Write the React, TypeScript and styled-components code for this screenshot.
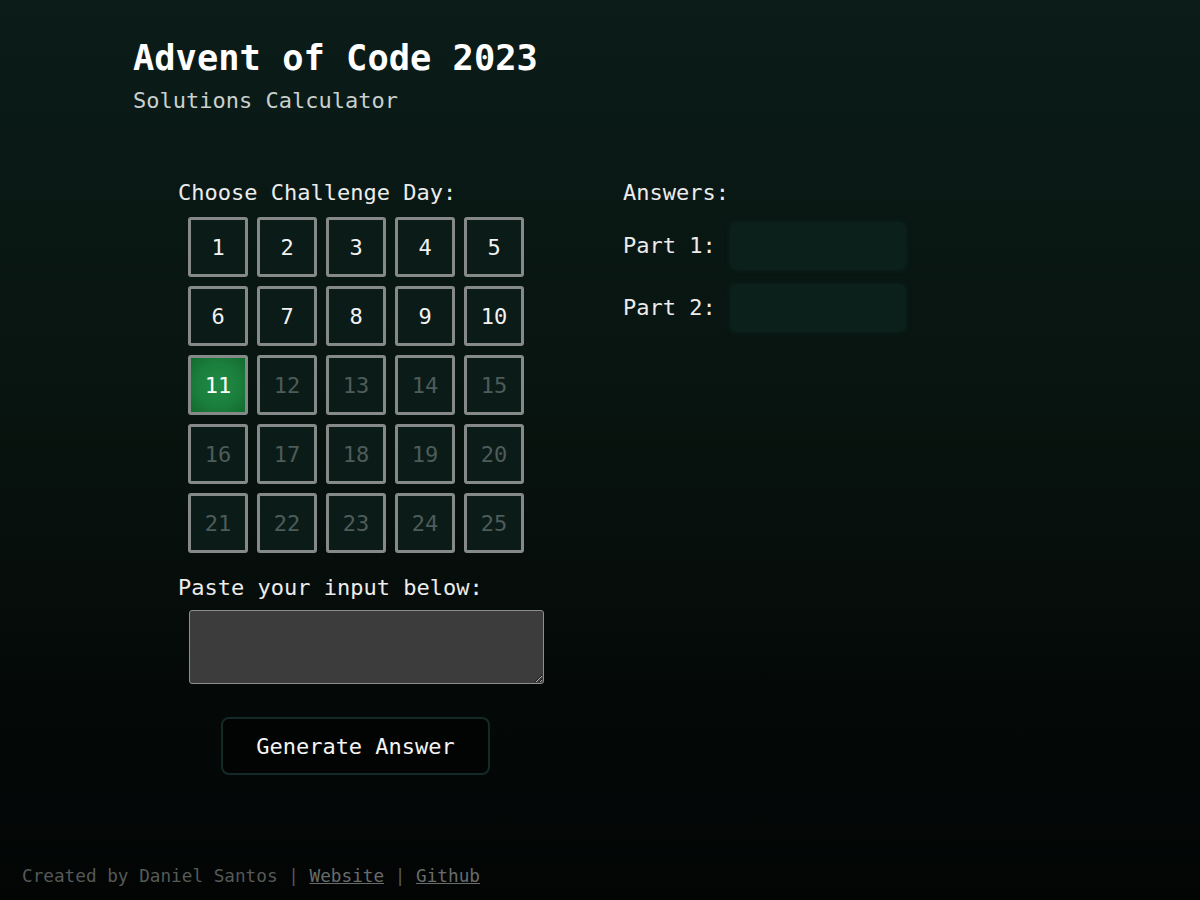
import React, { useState } from 'react';
import styled, { createGlobalStyle } from 'styled-components';

const GlobalStyle = createGlobalStyle`
  html, body {
    margin: 0;
    padding: 0;
  }
  body {
    background: linear-gradient(180deg, #0b1c19 0%, #08140f 45%, #040807 80%, #030505 100%);
    color: #ececec;
    font-family: 'DejaVu Sans Mono', 'Liberation Mono', monospace;
  }
`;

const days = Array.from({ length: 25 }, (_, i) => i + 1);
const lastAvailable = 11;

const App: React.FC = () => {
  const [selected, setSelected] = useState<number>(11);
  const [input, setInput] = useState<string>('');

  return (
    <Page>
      <GlobalStyle />
      <Header>
        <Title>Advent of Code 2023</Title>
        <Subtitle>Solutions Calculator</Subtitle>
      </Header>

      <Main>
        <LeftColumn>
          <Label>Choose Challenge Day:</Label>
          <DayGrid>
            {days.map((day) => (
              <DayButton
                key={day}
                $active={day === selected}
                $disabled={day > lastAvailable}
                onClick={() => day <= lastAvailable && setSelected(day)}
              >
                {day}
              </DayButton>
            ))}
          </DayGrid>

          <Label $top={21}>Paste your input below:</Label>
          <InputArea value={input} onChange={(e) => setInput(e.target.value)} />

          <GenerateButton>Generate Answer</GenerateButton>
        </LeftColumn>

        <RightColumn>
          <Label>Answers:</Label>
          <AnswerRow $top={15}>
            <AnswerLabel>Part 1:</AnswerLabel>
            <AnswerBox />
          </AnswerRow>
          <AnswerRow $top={14}>
            <AnswerLabel>Part 2:</AnswerLabel>
            <AnswerBox />
          </AnswerRow>
        </RightColumn>
      </Main>

      <Footer>
        Created by Daniel Santos | <FooterLink href="#">Website</FooterLink> |{' '}
        <FooterLink href="#">Github</FooterLink>
      </Footer>
    </Page>
  );
};

const Page = styled.div`
  display: flex;
  flex-direction: column;
  min-height: 100vh;
  box-sizing: border-box;
`;

const Header = styled.header`
  padding: 36px 0 0 133px;
`;

const Title = styled.h1`
  margin: 0;
  font-size: 35.4px;
  line-height: 44px;
  font-weight: 700;
  color: #ffffff;
`;

const Subtitle = styled.h2`
  margin: 7px 0 0;
  font-size: 22px;
  line-height: 28px;
  font-weight: 400;
  color: #c9d0cd;
`;

const Main = styled.main`
  display: flex;
  margin-top: 64px;
  padding-left: 178px;
`;

const LeftColumn = styled.section`
  display: flex;
  flex-direction: column;
  align-items: flex-start;
  width: 445px;
  flex-shrink: 0;
`;

const RightColumn = styled.section`
  display: flex;
  flex-direction: column;
`;

const Label = styled.div<{ $top?: number }>`
  margin-top: ${(p) => p.$top ?? 0}px;
  font-size: 22px;
  line-height: 28px;
  color: #ececec;
  white-space: nowrap;
`;

const DayGrid = styled.div`
  display: grid;
  grid-template-columns: repeat(5, 60px);
  grid-auto-rows: 60px;
  gap: 9px;
  margin: 10px 0 0 10px;
`;

const DayButton = styled.button<{ $active: boolean; $disabled: boolean }>`
  box-sizing: border-box;
  width: 60px;
  height: 60px;
  padding: 0;
  border: 3px solid #858987;
  border-radius: 3px;
  background: ${(p) =>
    p.$active ? 'radial-gradient(circle, #208c45 0%, #1a7d3c 60%, #126a2f 100%)' : '#0b1b18'};
  color: ${(p) => (p.$active ? '#ffffff' : p.$disabled ? '#4d5c58' : '#f2f2f2')};
  font-family: inherit;
  font-size: 22px;
  cursor: ${(p) => (p.$disabled ? 'default' : 'pointer')};
`;

const InputArea = styled.textarea`
  box-sizing: border-box;
  width: 355px;
  height: 74px;
  margin: 8px 0 0 11px;
  background: #3c3c3c;
  border: 1px solid #8e8e8e;
  border-radius: 3px;
  color: #ececec;
  font-family: inherit;
  font-size: 14px;
`;

const GenerateButton = styled.button`
  box-sizing: border-box;
  width: 269px;
  height: 58px;
  margin: 33px 0 0 43px;
  background: #020403;
  border: 2px solid #142a26;
  border-radius: 8px;
  color: #f4f4f4;
  font-family: inherit;
  font-size: 22px;
  cursor: pointer;
`;

const AnswerRow = styled.div<{ $top: number }>`
  display: flex;
  align-items: center;
  gap: 14px;
  margin-top: ${(p) => p.$top}px;
`;

const AnswerLabel = styled.span`
  font-size: 22px;
  line-height: 28px;
  color: #ececec;
  white-space: nowrap;
`;

const AnswerBox = styled.div`
  width: 176px;
  height: 48px;
  border-radius: 6px;
  background: #0b1f1b;
  box-shadow: 0 0 4px 1px #0b1f1b;
`;

const Footer = styled.footer`
  margin-top: auto;
  padding: 0 22px 13px;
  font-size: 17.7px;
  line-height: 22px;
  color: #555a58;
`;

const FooterLink = styled.a`
  color: #686d6b;
  text-decoration: underline;
`;

export default App;
